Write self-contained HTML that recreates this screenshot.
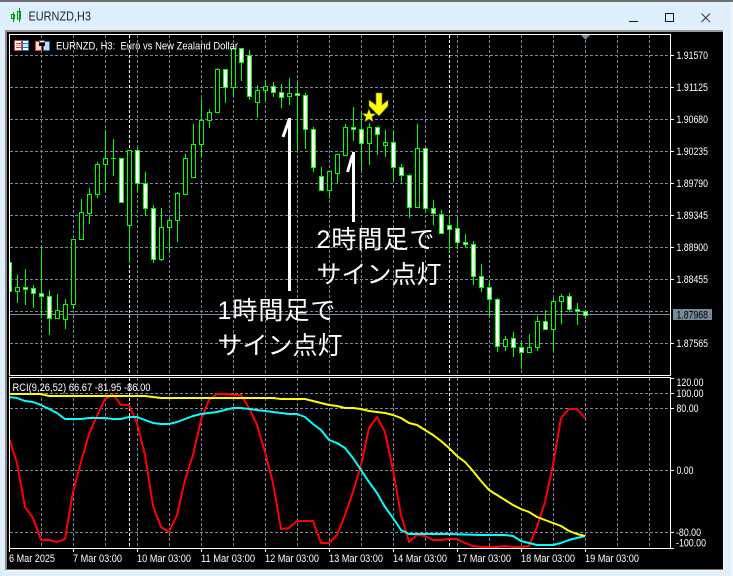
<!DOCTYPE html>
<html><head><meta charset="utf-8"><title>EURNZD,H3</title>
<style>
html,body{margin:0;padding:0;width:733px;height:576px;overflow:hidden;background:#dfeffd}
svg{display:block;position:absolute;left:0;top:0}
text{font-family:"Liberation Sans","Noto Sans CJK JP",sans-serif;font-size:11px;fill:#fff}
.c{shape-rendering:crispEdges}
.j{font-size:25px;font-family:"Liberation Sans","Noto Sans CJK JP",sans-serif}
</style></head><body>
<svg width="733" height="576" viewBox="0 0 733 576" xmlns="http://www.w3.org/2000/svg">
<defs><clipPath id="m"><rect x="10" y="35" width="660" height="340"/></clipPath><clipPath id="s"><rect x="10" y="378" width="660" height="170"/></clipPath></defs>
<g class="c">
<rect width="733" height="576" fill="#dfeffd"/>
<rect x="731" y="2" width="2" height="574" fill="#f6f6f6"/>
<rect width="733" height="2" fill="#6e6e6e"/>
<rect x="5" y="30" width="720" height="542" fill="#f2f2f2"/>
<rect x="5" y="30" width="718" height="2" fill="#9a9a9a"/>
<rect x="5" y="30" width="2" height="540" fill="#8a8a8a"/>
<rect x="7" y="32" width="716" height="537.5" fill="#000"/>
</g>
<!-- title icon -->
<g class="c" fill="none" stroke="#009a00">
<path d="M13.5 12V22M19.5 8V22"/>
<rect x="11.5" y="14.5" width="3" height="4"/>
<rect x="17.5" y="11.5" width="3" height="7.5"/>
</g>
<text x="28.5" y="20.5" textLength="62.5" lengthAdjust="spacingAndGlyphs" style="font-size:12.5px;fill:#1b2733">EURNZD,H3</text>
<!-- window controls -->
<g class="c" fill="none" stroke="#1a1a1a">
<path d="M629 21.5H638"/>
<rect x="665.5" y="13.5" width="8" height="8"/>
</g>
<path d="M701.5 13.5L710 22M710 13.5L701.5 22" stroke="#333" stroke-width="1" fill="none"/>

<!-- grid -->
<g class="c" fill="none" stroke="#778899" stroke-dasharray="3 2">
<path d="M10 55.5H670M10 87.5H670M10 119.5H670M10 151.5H670M10 183.5H670M10 215.5H670M10 247.5H670M10 279.5H670M10 311.5H670M10 343.5H670"/>
<path d="M41.5 35V375M73.5 35V375M105.5 35V375M137.5 35V375M169.5 35V375M201.5 35V375M233.5 35V375M265.5 35V375M297.5 35V375M329.5 35V375M361.5 35V375M393.5 35V375M425.5 35V375M457.5 35V375M489.5 35V375M521.5 35V375M553.5 35V375M585.5 35V375M617.5 35V375M649.5 35V375"/>
<path d="M10 393.5H670M10 408.5H670M10 470.5H670M10 532.5H670"/>
<path d="M41.5 378V548M73.5 378V548M105.5 378V548M137.5 378V548M169.5 378V548M201.5 378V548M233.5 378V548M265.5 378V548M297.5 378V548M329.5 378V548M361.5 378V548M393.5 378V548M425.5 378V548M457.5 378V548M489.5 378V548M521.5 378V548M553.5 378V548M585.5 378V548M617.5 378V548M649.5 378V548"/>
</g>
<g class="c" fill="none" stroke="#fff" stroke-dasharray="3 2">
<path d="M129.5 35V375M449.5 35V375M129.5 378V548M449.5 378V548"/>
</g>
<path class="c" d="M10 314.5H670" stroke="#778899" fill="none"/>
<path class="c" d="M581 35h9l-4.5 5z" fill="#778899"/>

<!-- candles -->
<g class="c" clip-path="url(#m)" stroke="#00ff00" stroke-width="1">
<path fill="none" d="M17.5 275V303M25.5 269V305M33.5 285V308M41.5 247V318M49.5 290V335M57.5 294V319M65.5 299V329M73.5 239V309M81.5 199V240M89.5 188V224M97.5 162V198M105.5 130V193M113.5 139V176M129.5 150V263M137.5 148V193M145.5 172V216M153.5 205V263M161.5 208V261M169.5 218V252M177.5 192V242M185.5 154V194M193.5 124V177M201.5 99V158M209.5 109V128M217.5 68V112M225.5 69V103M233.5 48V97M241.5 48V81M249.5 50V100M257.5 85V118M265.5 81V102M273.5 82V97M281.5 84V108M289.5 78V105M297.5 82V151M305.5 93V149M313.5 127V172M321.5 167V190M329.5 171V199M337.5 154V183M345.5 124V156M353.5 107V141M361.5 112V170M369.5 123V165M377.5 126V155M385.5 130V157M393.5 130V181M401.5 164V184M409.5 174V218M417.5 124V208M425.5 148V211M433.5 200V225M441.5 210V234M449.5 215V253M457.5 218V249M465.5 234V247M473.5 241V285M481.5 264V292M489.5 282V317M497.5 298V352M505.5 336V351M513.5 332V357M521.5 343V369M529.5 334V352M537.5 316V351M545.5 310V329M553.5 298V350M561.5 294V324M569.5 293V312M577.5 303V325M585.5 310V319"/>
<path fill="#fff" d="M7.5 262.5h4V291.5h-4zM23.5 287.5h4V289.5h-4zM31.5 288.5h4V293.5h-4zM39.5 293.5h4V296.5h-4zM47.5 296.5h4V318.5h-4zM119.5 158.5h4V202.5h-4zM135.5 150.5h4V183.5h-4zM143.5 183.5h4V208.5h-4zM151.5 208.5h4V259.5h-4zM223.5 69.5h4V87.5h-4zM239.5 48.5h4V62.5h-4zM247.5 55.5h4V96.5h-4zM271.5 86.5h4V92.5h-4zM279.5 92.5h4V97.5h-4zM295.5 93.5h4V95.5h-4zM303.5 95.5h4V129.5h-4zM311.5 129.5h4V167.5h-4zM319.5 176.5h4V190.5h-4zM351.5 127.5h4V129.5h-4zM359.5 129.5h4V143.5h-4zM375.5 127.5h4V134.5h-4zM391.5 142.5h4V167.5h-4zM399.5 167.5h4V175.5h-4zM407.5 175.5h4V207.5h-4zM423.5 148.5h4V208.5h-4zM431.5 208.5h4V213.5h-4zM439.5 214.5h4V233.5h-4zM447.5 225.5h4V229.5h-4zM455.5 228.5h4V242.5h-4zM463.5 242.5h4V244.5h-4zM471.5 244.5h4V276.5h-4zM479.5 276.5h4V287.5h-4zM487.5 287.5h4V299.5h-4zM495.5 299.5h4V346.5h-4zM511.5 338.5h4V347.5h-4zM519.5 347.5h4V352.5h-4zM543.5 321.5h4V329.5h-4zM567.5 296.5h4V309.5h-4zM575.5 309.5h4V311.5h-4zM583.5 311.5h4V315.5h-4z"/>
<path fill="#000" d="M15.5 287.5h4V291.5h-4zM55.5 310.5h4V318.5h-4zM63.5 304.5h4V319.5h-4zM71.5 239.5h4V304.5h-4zM79.5 212.5h4V239.5h-4zM87.5 194.5h4V213.5h-4zM95.5 164.5h4V194.5h-4zM103.5 158.5h4V164.5h-4zM127.5 150.5h4V225.5h-4zM159.5 227.5h4V259.5h-4zM167.5 220.5h4V227.5h-4zM175.5 193.5h4V220.5h-4zM183.5 158.5h4V194.5h-4zM191.5 144.5h4V177.5h-4zM199.5 120.5h4V144.5h-4zM207.5 112.5h4V120.5h-4zM215.5 69.5h4V112.5h-4zM231.5 48.5h4V87.5h-4zM255.5 90.5h4V102.5h-4zM263.5 86.5h4V90.5h-4zM287.5 93.5h4V96.5h-4zM327.5 171.5h4V190.5h-4zM335.5 154.5h4V173.5h-4zM343.5 127.5h4V155.5h-4zM367.5 127.5h4V143.5h-4zM383.5 142.5h4V145.5h-4zM415.5 148.5h4V207.5h-4zM503.5 339.5h4V346.5h-4zM527.5 347.5h4V352.5h-4zM535.5 321.5h4V347.5h-4zM551.5 301.5h4V329.5h-4zM559.5 296.5h4V301.5h-4z"/>
<path fill="none" d="M111 158.5H116"/>
</g>

<!-- manual arrows -->
<path d="M289.5 118V291" stroke="#fff" stroke-width="3" fill="none"/>
<path d="M289 120L283 137" stroke="#fff" stroke-width="3" fill="none"/>
<path d="M353.5 152V222" stroke="#fff" stroke-width="3" fill="none"/>
<path d="M352.5 155L347.5 172" stroke="#fff" stroke-width="3" fill="none"/>

<!-- star & arrow -->
<polygon points="376,93 382,93 382,105 388,100 388,106 379,116 369,106 369,100 376,105" fill="#ffff00" stroke="#7d7d00" stroke-width=".6"/>
<polygon points="369,109 370.8,113.6 375.7,113.8 371.9,116.9 373.1,121.7 369,119 364.9,121.7 366.1,116.9 362.3,113.8 367.2,113.6" fill="#ffff00" stroke="#7d7d00" stroke-width=".6"/>

<!-- Japanese labels -->
<text class="j" x="316.5" y="248" letter-spacing="1">2時間足で</text>
<text class="j" x="316.5" y="283">サイン点灯</text>
<text class="j" x="217.5" y="319" letter-spacing="1">1時間足で</text>
<text class="j" x="217.5" y="354">サイン点灯</text>

<!-- RCI lines -->
<g clip-path="url(#s)" fill="none" stroke-width="2" stroke-linejoin="round">
<polyline stroke="#ff0000" points="9,438 17,463 25,507 33,518 41,540 49,540 57,542 65,539 73,492 81,462 89,434 97,416 105,399 113,394 121,405 129,405 137,423 145,455 153,506 161,527 169,532 177,515 185,480 193,455 201,420 209,400 217,394 225,394 233,395 241,395 249,408 257,425 265,452 273,483 281,529 289,528 297,521 305,521 313,521 321,543 329,543 337,535 345,515 353,492 361,465 369,428 377,417 385,432 393,470 401,515 409,542 417,535 425,536 433,540 441,540 449,539 457,539 465,543 473,546 481,547 489,547 497,547 505,546 513,547 521,547 529,546 537,527 545,502 553,465 561,418 569,409 577,409 585,418"/>
<polyline stroke="#00ffff" points="9,397 17,398 25,401 33,402 41,405 49,409 57,413 65,419 73,419 81,419 89,418 97,418 105,418 113,419 121,419 129,417 137,417 145,420 153,423 161,424 169,424 177,422 185,419 193,416 201,414 209,413 217,412 225,410 233,408 241,408 249,409 257,410 265,411 273,412 281,413 289,414 297,414 305,417 313,424 321,430 329,440 337,443 345,448 353,458 361,470 369,482 377,493 385,507 393,518 401,530 409,534 417,534 425,534 449,534 481,535 497,535 505,535 513,536 521,541 529,543 537,545 545,545 553,545 561,543 569,540 577,538 585,536"/>
<polyline stroke="#ffff00" points="9,394 41,394 49,396 145,396 153,397 161,398 273,398 281,399 305,399 313,401 321,403 329,405 337,406 345,408 353,408 361,409 369,411 377,412 385,413 393,415 401,418 409,423 417,425 425,430 433,435 441,441 449,448 457,456 465,462 473,471 481,481 489,490 497,495 505,500 513,505 521,509 529,512 537,517 545,520 553,523 561,526 569,531 577,534 585,536"/>
</g>

<!-- frames -->
<g class="c" fill="none" stroke="#fff">
<rect x="9.5" y="34.5" width="661" height="341"/>
<rect x="9.5" y="377.5" width="661" height="171"/>
<path d="M670 55.5h4M670 87.5h4M670 119.5h4M670 151.5h4M670 183.5h4M670 215.5h4M670 247.5h4M670 279.5h4M670 343.5h4"/>
<path d="M670 378.5h4M670 393.5h4M670 408.5h4M670 470.5h4M670 532.5h4M670 548.5h4"/>
<path d="M9.5 548v4M73.5 548v4M137.5 548v4M201.5 548v4M265.5 548v4M329.5 548v4M393.5 548v4M457.5 548v4M521.5 548v4M585.5 548v4"/>
</g>

<!-- header -->
<g class="c">
<rect x="14" y="40" width="8" height="11" fill="#e53935"/><rect x="15" y="41" width="6" height="9" fill="#fff"/>
<rect x="16" y="43" width="5" height="1" fill="#e53935"/><rect x="16" y="45" width="5" height="1" fill="#f0a8a0"/><rect x="16" y="47" width="5" height="1" fill="#e53935"/>
<rect x="22" y="40" width="7" height="11" fill="#1f6fb2"/><rect x="23" y="41" width="5" height="9" fill="#fff"/>
<rect x="23" y="43" width="5" height="1" fill="#1f6fb2"/><rect x="23" y="45" width="5" height="1" fill="#a8cdea"/><rect x="23" y="47" width="5" height="1" fill="#1f6fb2"/>
<rect x="35" y="41" width="7" height="10" fill="#e53935"/><rect x="36" y="42" width="5" height="8" fill="#ffd5cf"/>
<rect x="43" y="41" width="7" height="10" fill="#1f6fb2"/><rect x="44" y="42" width="5" height="8" fill="#bfe0f8"/>
<rect x="39" y="40" width="6" height="3" fill="#555"/><rect x="40" y="41" width="4" height="1" fill="#fff"/>
<rect x="39" y="43" width="6" height="3" fill="#000"/>
</g>
<text x="56" y="49.5" textLength="182" lengthAdjust="spacingAndGlyphs" xml:space="preserve">EURNZD, H3:  Euro vs New Zealand Dollar</text>
<text x="12.5" y="391" textLength="138" lengthAdjust="spacingAndGlyphs">RCI(9,26,52) 66.67 -81.95 -86.00</text>

<!-- price labels -->
<text x="676.5" y="59" textLength="31.5" lengthAdjust="spacingAndGlyphs">1.91570</text>
<text x="676.5" y="91" textLength="31.5" lengthAdjust="spacingAndGlyphs">1.91125</text>
<text x="676.5" y="123" textLength="31.5" lengthAdjust="spacingAndGlyphs">1.90680</text>
<text x="676.5" y="155" textLength="31.5" lengthAdjust="spacingAndGlyphs">1.90235</text>
<text x="676.5" y="187" textLength="31.5" lengthAdjust="spacingAndGlyphs">1.89790</text>
<text x="676.5" y="219" textLength="31.5" lengthAdjust="spacingAndGlyphs">1.89345</text>
<text x="676.5" y="251" textLength="31.5" lengthAdjust="spacingAndGlyphs">1.88900</text>
<text x="676.5" y="283" textLength="31.5" lengthAdjust="spacingAndGlyphs">1.88455</text>
<text x="676.5" y="347" textLength="31.5" lengthAdjust="spacingAndGlyphs">1.87565</text>
<rect class="c" x="673" y="309" width="39" height="11" fill="#778899"/>
<text x="676.5" y="318.5" textLength="31.5" lengthAdjust="spacingAndGlyphs" style="fill:#000">1.87968</text>

<!-- RCI scale -->
<text x="676.5" y="386" textLength="27" lengthAdjust="spacingAndGlyphs">120.00</text>
<text x="676.5" y="397" textLength="27" lengthAdjust="spacingAndGlyphs">100.00</text>
<text x="676.5" y="412" textLength="22" lengthAdjust="spacingAndGlyphs">80.00</text>
<text x="676.5" y="474" textLength="17" lengthAdjust="spacingAndGlyphs">0.00</text>
<text x="676" y="536" textLength="25" lengthAdjust="spacingAndGlyphs">-80.00</text>
<text x="676" y="546.5" textLength="30" lengthAdjust="spacingAndGlyphs">-100.00</text>

<!-- time labels -->
<text x="9" y="562" textLength="46" lengthAdjust="spacingAndGlyphs">6 Mar 2025</text>
<text x="73" y="562" textLength="49" lengthAdjust="spacingAndGlyphs">7 Mar 03:00</text>
<text x="137" y="562" textLength="54" lengthAdjust="spacingAndGlyphs">10 Mar 03:00</text>
<text x="201" y="562" textLength="54" lengthAdjust="spacingAndGlyphs">11 Mar 03:00</text>
<text x="265" y="562" textLength="54" lengthAdjust="spacingAndGlyphs">12 Mar 03:00</text>
<text x="329" y="562" textLength="54" lengthAdjust="spacingAndGlyphs">13 Mar 03:00</text>
<text x="393" y="562" textLength="54" lengthAdjust="spacingAndGlyphs">14 Mar 03:00</text>
<text x="457" y="562" textLength="54" lengthAdjust="spacingAndGlyphs">17 Mar 03:00</text>
<text x="521" y="562" textLength="54" lengthAdjust="spacingAndGlyphs">18 Mar 03:00</text>
<text x="585" y="562" textLength="54" lengthAdjust="spacingAndGlyphs">19 Mar 03:00</text>
</svg>
</body></html>
